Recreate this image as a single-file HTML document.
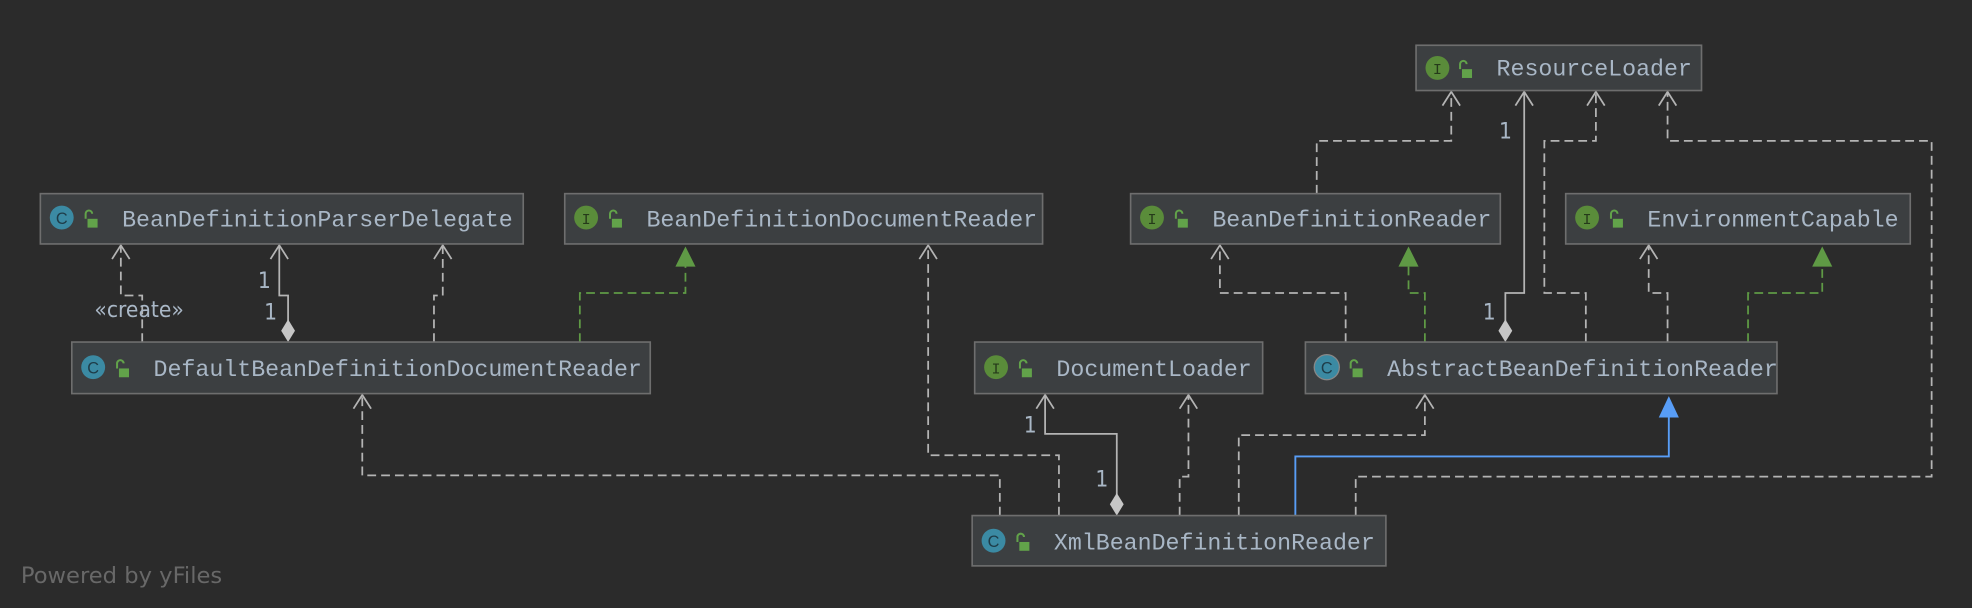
<!DOCTYPE html>
<html><head><meta charset="utf-8"><style>
html,body{margin:0;padding:0;background:#2b2b2b;width:1972px;height:608px;overflow:hidden}
svg{display:block}
.bx{fill:#3c3f41;stroke:#6e6e6e;stroke-width:1.3}
.t{font-family:"Liberation Mono",monospace;font-size:18.5px;fill:#a9b7c6}
.d{fill:none;stroke:#b4b4b4;stroke-width:1.4;stroke-dasharray:7 4}
.s{fill:none;stroke:#b4b4b4;stroke-width:1.4}
.g{fill:none;stroke:#5f9a45;stroke-width:1.4;stroke-dasharray:7 4}
.ar{fill:none;stroke:#b4b4b4;stroke-width:1.4}
.n{font-family:"DejaVu Sans Condensed","DejaVu Sans",sans-serif;font-size:18px;fill:#a9b7c6}
</style></head><body>
<svg width="1972" height="608" viewBox="0 0 1568 483.5" xmlns="http://www.w3.org/2000/svg">
<defs>
<g id="lock"><path d="M0 0 v-4 a2.6 2.6 0 0 1 5.2 0" fill="none" stroke="#62a34a" stroke-width="1.6"/><rect x="1.5" y="0" width="8" height="7" fill="#62a34a"/></g>
<g id="ci"><circle r="9.5" fill="#3b8aa3"/><text y="5" text-anchor="middle" font-family="Liberation Sans,sans-serif" font-size="13" fill="#1e3c48">C</text></g>
<g id="ii"><circle r="9.5" fill="#5a8c3a"/><text y="5" text-anchor="middle" font-family="Liberation Mono,monospace" font-size="12" fill="#253a1a">I</text></g>
</defs>
<path class="d" d="M113 272 V235 H96 V196"/>
<path class="ar" d="M89 206 L96 195 L103 206"/>
<text class="n" x="75" y="252">«create»</text>
<path class="s" d="M229 256 V235 H222 V196"/>
<path class="ar" d="M215 206 L222 195 L229 206"/>
<path d="M229 254 L234.5 263 L229 272 L223.5 263Z" fill="#c6c6c6"/>
<text class="n" x="205" y="229">1</text><text class="n" x="210" y="254">1</text>
<path class="d" d="M345 272 V235 H352 V196"/>
<path class="ar" d="M345 206 L352 195 L359 206"/>
<path class="g" d="M461 272 V233 H545 V210"/>
<path d="M537 212 L545 196 L553 212Z" fill="#5f9a45"/>
<path class="d" d="M842 410 V362 H738 V196"/>
<path class="ar" d="M731 206 L738 195 L745 206"/>
<path class="d" d="M795 410 V378 H288 V315"/>
<path class="ar" d="M281 325 L288 314 L295 325"/>
<path class="s" d="M888 394 V345 H831 V315"/>
<path class="ar" d="M824 325 L831 314 L838 325"/>
<path d="M888 392 L893.5 401 L888 410 L882.5 401Z" fill="#c6c6c6"/>
<text class="n" x="814" y="344">1</text><text class="n" x="871" y="387">1</text>
<path class="d" d="M938 410 V379 H945 V315"/>
<path class="ar" d="M938 325 L945 314 L952 325"/>
<path class="d" d="M985 410 V346 H1133 V315"/>
<path class="ar" d="M1126 325 L1133 314 L1140 325"/>
<path d="M1030 410 V363 H1327 V330" fill="none" stroke="#589df6" stroke-width="1.5"/>
<path d="M1319 332 L1327 315 L1335 332Z" fill="#589df6"/>
<path class="d" d="M1078 410 V379 H1536 V112 H1326 V74"/>
<path class="ar" d="M1319 84 L1326 73 L1333 84"/>
<path class="d" d="M1070 272 V233 H970 V196"/>
<path class="ar" d="M963 206 L970 195 L977 206"/>
<path class="g" d="M1133 272 V233 H1120 V210"/>
<path d="M1112 212 L1120 196 L1128 212Z" fill="#5f9a45"/>
<path class="s" d="M1197 256 V233 H1212 V74"/>
<path class="ar" d="M1205 84 L1212 73 L1219 84"/>
<path d="M1197 254 L1202.5 263 L1197 272 L1191.5 263Z" fill="#c6c6c6"/>
<text class="n" x="1179" y="254">1</text><text class="n" x="1192" y="110">1</text>
<path class="d" d="M1261 272 V233 H1228 V112 H1269 V74"/>
<path class="ar" d="M1262 84 L1269 73 L1276 84"/>
<path class="d" d="M1326 272 V233 H1311 V196"/>
<path class="ar" d="M1304 206 L1311 195 L1318 206"/>
<path class="g" d="M1390 272 V233 H1449 V210"/>
<path d="M1441 212 L1449 196 L1457 212Z" fill="#5f9a45"/>
<path class="d" d="M1047 154 V112 H1154 V74"/>
<path class="ar" d="M1147 84 L1154 73 L1161 84"/>

<rect class="bx" x="1126" y="36" width="227" height="36"/>
<use href="#ii" x="1143" y="54"/><use href="#lock" x="1161" y="55"/>
<text class="t" x="1190" y="60">ResourceLoader</text>

<rect class="bx" x="32" y="154" width="384" height="40"/>
<use href="#ci" x="49" y="173"/><use href="#lock" x="68" y="174"/>
<text class="t" x="97" y="180">BeanDefinitionParserDelegate</text>

<rect class="bx" x="449" y="154" width="380" height="40"/>
<use href="#ii" x="466" y="173"/><use href="#lock" x="485" y="174"/>
<text class="t" x="514" y="180">BeanDefinitionDocumentReader</text>

<rect class="bx" x="899" y="154" width="294" height="40"/>
<use href="#ii" x="916" y="173"/><use href="#lock" x="935" y="174"/>
<text class="t" x="964" y="180">BeanDefinitionReader</text>

<rect class="bx" x="1245" y="154" width="274" height="40"/>
<use href="#ii" x="1262" y="173"/><use href="#lock" x="1281" y="174"/>
<text class="t" x="1310" y="180">EnvironmentCapable</text>

<rect class="bx" x="57" y="272" width="460" height="41"/>
<use href="#ci" x="74" y="292"/><use href="#lock" x="93" y="293"/>
<text class="t" x="122" y="299">DefaultBeanDefinitionDocumentReader</text>

<rect class="bx" x="775" y="272" width="229" height="41"/>
<use href="#ii" x="792" y="292"/><use href="#lock" x="811" y="293"/>
<text class="t" x="840" y="299">DocumentLoader</text>

<rect class="bx" x="1038" y="272" width="375" height="41"/>
<circle cx="1055" cy="292" r="10.5" fill="#888"/>
<use href="#ci" x="1055" y="292"/><use href="#lock" x="1074" y="293"/>
<text class="t" x="1103" y="299">AbstractBeanDefinitionReader</text>

<rect class="bx" x="773" y="410" width="329" height="40"/>
<use href="#ci" x="790" y="430"/><use href="#lock" x="809" y="431"/>
<text class="t" x="838" y="437">XmlBeanDefinitionReader</text>

<text x="16.5" y="463.5" font-family="DejaVu Sans,sans-serif" font-size="18" fill="#686868">Powered by yFiles</text>
</svg>
</body></html>
